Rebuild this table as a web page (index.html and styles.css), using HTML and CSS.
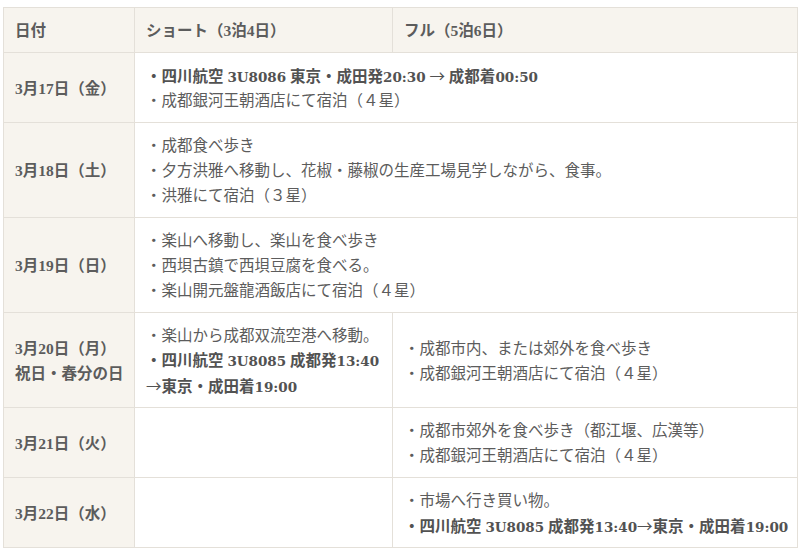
FILE: index.html
```html
<!DOCTYPE html>
<html lang="ja">
<head>
    <meta charset="UTF-8">
    <meta name="viewport" content="width=device-width, initial-scale=1.0">
    <title>成都 食べ歩きツアー 日程</title>
    <link rel="stylesheet" href="styles.css">
</head>
<body>
    <div class="schedule-wrap">
        <table class="schedule">
            <colgroup>
                <col class="col-date">
                <col class="col-short">
                <col class="col-full">
            </colgroup>
            <thead>
                <tr>
                    <th><div class="ln">日付</div></th>
                    <th><div class="ln">ショート（3泊4日）</div></th>
                    <th><div class="ln">フル（5泊6日）</div></th>
                </tr>
            </thead>
            <tbody>
                <tr>
                    <td class="date"><div class="ln">3月17日（金）</div></td>
                    <td colspan="2">
                        <div class="ln strong">・四川航空 <span class="num">3U8086</span> 東京・成田発<span class="num">20:30</span> <span class="arrow">→</span> 成都着<span class="num">00:50</span></div>
                        <div class="ln">・成都銀河王朝酒店にて宿泊（４星）</div>
                    </td>
                </tr>
                <tr>
                    <td class="date"><div class="ln">3月18日（土）</div></td>
                    <td colspan="2">
                        <div class="ln">・成都食べ歩き</div>
                        <div class="ln">・夕方洪雅へ移動し、花椒・藤椒の生産工場見学しながら、食事。</div>
                        <div class="ln">・洪雅にて宿泊（３星）</div>
                    </td>
                </tr>
                <tr>
                    <td class="date"><div class="ln">3月19日（日）</div></td>
                    <td colspan="2">
                        <div class="ln">・楽山へ移動し、楽山を食べ歩き</div>
                        <div class="ln">・西垻古鎮で西垻豆腐を食べる。</div>
                        <div class="ln">・楽山開元盤龍酒飯店にて宿泊（４星）</div>
                    </td>
                </tr>
                <tr>
                    <td class="date">
                        <div class="ln">3月20日（月）</div>
                        <div class="ln">祝日・春分の日</div>
                    </td>
                    <td>
                        <div class="ln">・楽山から成都双流空港へ移動。</div>
                        <div class="ln strong">・四川航空 <span class="num">3U8085</span> 成都発<span class="num">13:40</span></div>
                        <div class="ln strong"><span class="arrow">→</span>東京・成田着<span class="num">19:00</span></div>
                    </td>
                    <td>
                        <div class="ln">・成都市内、または郊外を食べ歩き</div>
                        <div class="ln">・成都銀河王朝酒店にて宿泊（４星）</div>
                    </td>
                </tr>
                <tr>
                    <td class="date"><div class="ln">3月21日（火）</div></td>
                    <td></td>
                    <td>
                        <div class="ln">・成都市郊外を食べ歩き（都江堰、広漢等）</div>
                        <div class="ln">・成都銀河王朝酒店にて宿泊（４星）</div>
                    </td>
                </tr>
                <tr>
                    <td class="date"><div class="ln">3月22日（水）</div></td>
                    <td></td>
                    <td>
                        <div class="ln">・市場へ行き買い物。</div>
                        <div class="ln strong">・四川航空 <span class="num">3U8085</span> 成都発<span class="num">13:40</span><span class="arrow">→</span>東京・成田着<span class="num">19:00</span></div>
                    </td>
                </tr>
            </tbody>
        </table>
    </div>
</body>
</html>
```

FILE: styles.css
```css
body {
    margin: 0;
    background-color: #fff;
    font-family: "Liberation Serif", "Noto Sans CJK JP", serif;
    color: #5c5c5c;
}

.schedule-wrap {
    padding: 7px 3px 0 3px;
}

.schedule {
    width: 794px;
    border-collapse: collapse;
    table-layout: fixed;
    font-size: 15.5px;
}

.col-date { width: 131px; }
.col-short { width: 258px; }
.col-full { width: 405px; }

.schedule th,
.schedule td {
    border: 1px solid #e4e0d9;
    padding: 10px 11px 9px 11px;
    text-align: left;
    vertical-align: middle;
    white-space: nowrap;
}

/* шапка и колонка дат — кремовый фон */
.schedule th,
.schedule td.date {
    background-color: #f7f4ee;
    font-weight: bold;
}

/* одна строка текста — фиксированная высота, чтобы шрифты не раздували строку */
.ln {
    height: 25px;
    line-height: 25px;
}

.ln.strong {
    font-weight: bold;
    color: #525252;
}

/* номера рейсов и время — широкие засечные цифры */
.num {
    font-family: "DejaVu Serif", serif;
    font-size: 13.5px;
    line-height: 25px;
}

.arrow {
    font-family: "Noto Sans CJK JP", sans-serif;
    font-weight: normal;
    line-height: 25px;
}
```
